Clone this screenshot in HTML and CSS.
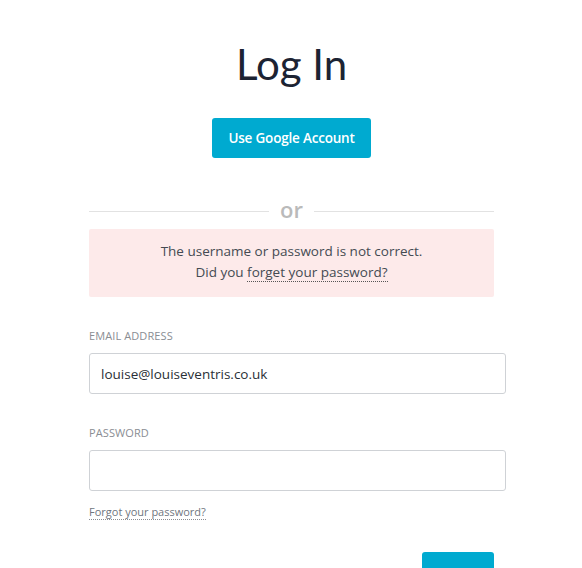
FILE: index.html
```html
<!DOCTYPE html>
<html>
<head>
<meta charset="utf-8">
<link rel="stylesheet" href="styles.css">
</head>
<body>
<main class="login">
  <h1 class="title">Log In</h1>
  <div class="google-row"><button class="btn btn-google">Use Google Account</button></div>
  <div class="divider"><span class="line"></span><span class="or">or</span><span class="line"></span></div>
  <div class="error">
    <p>The username or password is not correct.</p>
    <p>Did you <a class="dotted" href="#">forget your password?</a></p>
  </div>
  <form class="form">
    <label class="label">EMAIL ADDRESS</label>
    <input class="input" type="text" value="louise@louiseventris.co.uk">
    <label class="label label-pw">PASSWORD</label>
    <input class="input" type="password">
    <a class="forgot dotted" href="#">Forgot your password?</a>
    <div class="submit-row"><button class="btn btn-submit" type="button"></button></div>
  </form>
</main>
</body>
</html>
```
FILE: styles.css
```css
* { box-sizing: border-box; }
html, body { margin: 0; background: #fff; }
body { font-family: "Open Sans", "Liberation Sans", sans-serif; color: #3c4048; }
.login { width: 405px; margin-left: 89px; padding-top: 36px; }
.title { margin: 0; text-align: center; font-family: "Lato", "Open Sans", sans-serif; font-weight: 400; font-size: 42px; line-height: 56px; color: #1c2333; }
.google-row { display: flex; justify-content: center; margin-top: 26px; }
.btn { border: none; border-radius: 3px; background: #00aad0; color: #fff; cursor: pointer; font-family: "Open Sans", sans-serif; }
.btn-google { width: 159px; height: 40px; font-size: 13.5px; font-weight: 600; letter-spacing: -0.2px; }
.divider { display: flex; align-items: center; margin-top: 40px; height: 26px; }
.line { flex: 1; height: 1px; background: #e2e2e2; }
.or { padding: 0 11px; font-size: 22px; font-weight: 600; color: #bababa; line-height: 26px; margin-top: -4px; }
.error { margin-top: 5px; height: 68px; background: #fdeaea; border-radius: 2px; text-align: center; padding-top: 12px; font-size: 13.5px; color: #444a52; }
.error p { margin: 0; line-height: 21px; }
.dotted { color: inherit; text-decoration: none; border-bottom: 1px dotted #555; }
.form { display: flex; flex-direction: column; align-items: flex-start; }
.label { margin-top: 31px; font-size: 11px; color: #8a8d93; letter-spacing: 0.1px; line-height: 16px; }
.label-pw { margin-top: 31px; }
.input { margin-top: 9px; width: 417px; height: 41px; border: 1px solid #cfd2d6; border-radius: 3px; padding: 0 11px; font-family: "Open Sans", sans-serif; font-size: 13.5px; color: #2a2f36; }
.forgot { margin-top: 14px; font-size: 11px; color: #6f7680; border-bottom-color: #8a8d93; line-height: 14px; }
.submit-row { align-self: stretch; display: flex; justify-content: flex-end; margin-top: 32px; }
.btn-submit { width: 72px; height: 40px; }
```
